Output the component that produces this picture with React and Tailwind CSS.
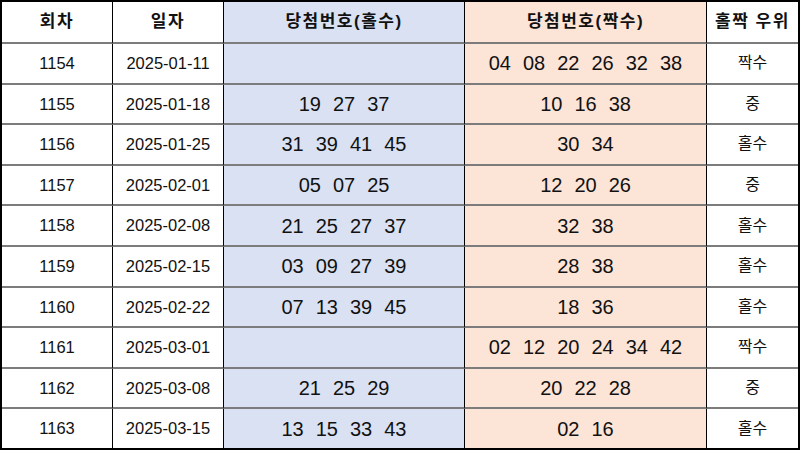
import React from 'react';

const rows = [
  ['1154', '2025-01-11', [], ['04', '08', '22', '26', '32', '38'], '짝수'],
  ['1155', '2025-01-18', ['19', '27', '37'], ['10', '16', '38'], '중'],
  ['1156', '2025-01-25', ['31', '39', '41', '45'], ['30', '34'], '홀수'],
  ['1157', '2025-02-01', ['05', '07', '25'], ['12', '20', '26'], '중'],
  ['1158', '2025-02-08', ['21', '25', '27', '37'], ['32', '38'], '홀수'],
  ['1159', '2025-02-15', ['03', '09', '27', '39'], ['28', '38'], '홀수'],
  ['1160', '2025-02-22', ['07', '13', '39', '45'], ['18', '36'], '홀수'],
  ['1161', '2025-03-01', [], ['02', '12', '20', '24', '34', '42'], '짝수'],
  ['1162', '2025-03-08', ['21', '25', '29'], ['20', '22', '28'], '중'],
  ['1163', '2025-03-15', ['13', '15', '33', '43'], ['02', '16'], '홀수'],
];

const font = { fontFamily: '"Liberation Sans", "Noto Sans CJK KR", sans-serif' };

function Nums({ list }) {
  return (
    <div className="flex gap-[12px] text-[20px] text-[#111]">
      {list.map((n, i) => (
        <span key={i}>{n}</span>
      ))}
    </div>
  );
}

const cell = 'flex items-center justify-center border-r border-black border-b-2 border-b-[#7c7c7c]';
const head = 'font-bold text-[17px] tracking-[1.5px] text-[#111]';

export default function App() {
  return (
    <div className="w-[800px] h-[450px] bg-white overflow-hidden" style={font}>
      <div className="grid grid-cols-[111px_111px_241px_242px_1fr] grid-rows-[42px_repeat(10,1fr)] h-full border-l-2 border-t-2 border-r-2 border-black">
        <div className={`${cell} ${head}`}>회차</div>
        <div className={`${cell} ${head}`}>일자</div>
        <div className={`${cell} ${head} bg-[#dae1f3]`}>당첨번호(홀수)</div>
        <div className={`${cell} ${head} bg-[#fce4d7]`}>당첨번호(짝수)</div>
        <div className={`${cell} ${head} border-r-0`}>홀짝 우위</div>
        {rows.map((r, i) => {
          const last = i === rows.length - 1 ? 'border-b-black' : '';
          return (
            <React.Fragment key={r[0]}>
              <div className={`${cell} ${last} text-[16.5px] text-[#111]`}>{r[0]}</div>
              <div className={`${cell} ${last} text-[16.5px] text-[#111]`}>{r[1]}</div>
              <div className={`${cell} ${last} bg-[#dae1f3]`}>
                <Nums list={r[2]} />
              </div>
              <div className={`${cell} ${last} bg-[#fce4d7]`}>
                <Nums list={r[3]} />
              </div>
              <div className={`${cell} ${last} border-r-0 text-[16px] text-[#111]`}>{r[4]}</div>
            </React.Fragment>
          );
        })}
      </div>
    </div>
  );
}
